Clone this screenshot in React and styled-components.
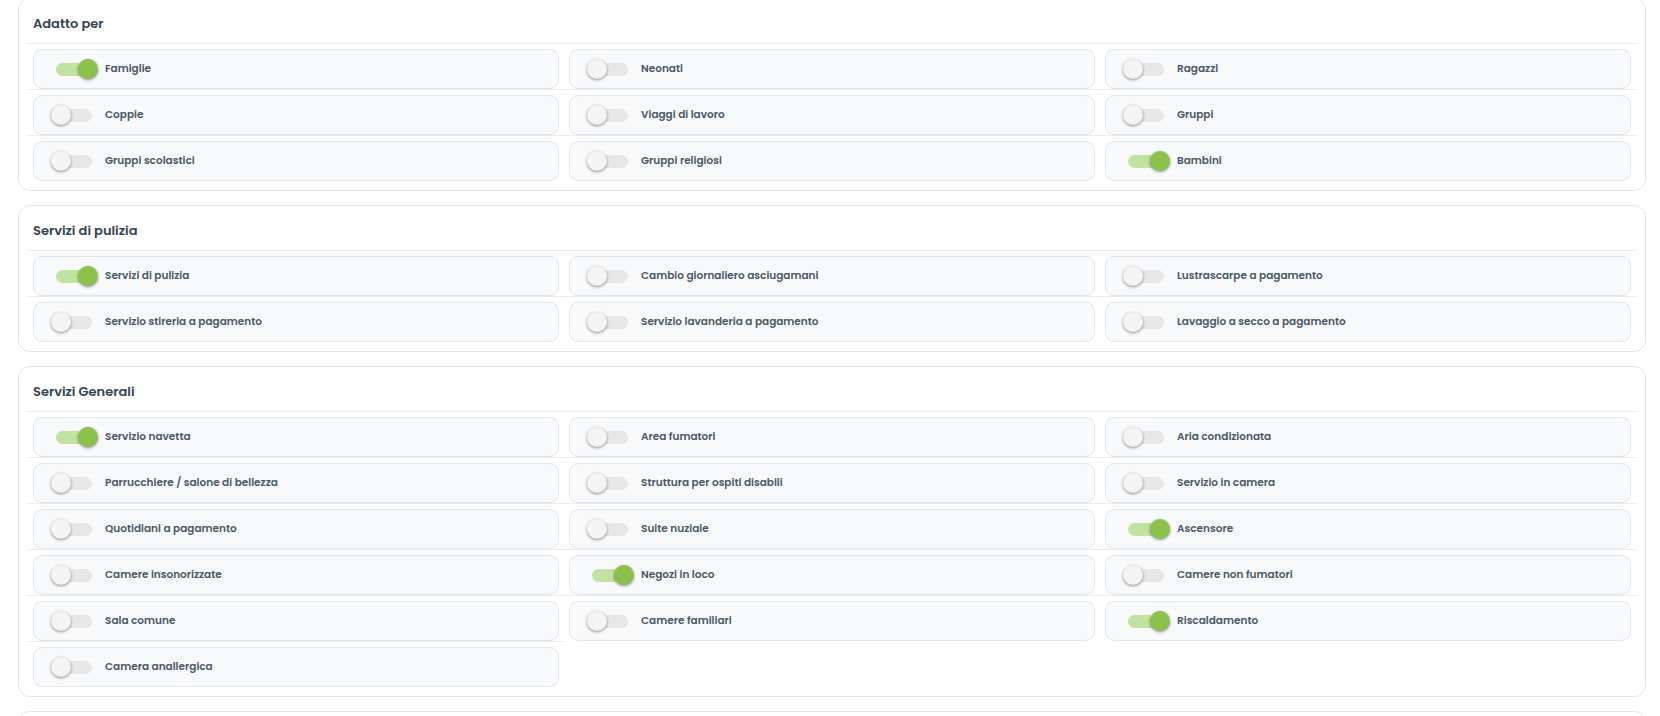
import React, { useState } from 'react';
import styled, { createGlobalStyle } from 'styled-components';

const GlobalStyle = createGlobalStyle`
  html, body {
    margin: 0;
    padding: 0;
    background: #ffffff;
    overflow: hidden;
  }
  * {
    box-sizing: border-box;
  }
`;

const sections = [
  {
    title: 'Adatto per',
    items: [
      ['Famiglie', true],
      ['Neonati', false],
      ['Ragazzi', false],
      ['Coppie', false],
      ['Viaggi di lavoro', false],
      ['Gruppi', false],
      ['Gruppi scolastici', false],
      ['Gruppi religiosi', false],
      ['Bambini', true],
    ],
  },
  {
    title: 'Servizi di pulizia',
    items: [
      ['Servizi di pulizia', true],
      ['Cambio giornaliero asciugamani', false],
      ['Lustrascarpe a pagamento', false],
      ['Servizio stireria a pagamento', false],
      ['Servizio lavanderia a pagamento', false],
      ['Lavaggio a secco a pagamento', false],
    ],
  },
  {
    title: 'Servizi Generali',
    items: [
      ['Servizio navetta', true],
      ['Area fumatori', false],
      ['Aria condizionata', false],
      ['Parrucchiere / salone di bellezza', false],
      ['Struttura per ospiti disabili', false],
      ['Servizio in camera', false],
      ['Quotidiani a pagamento', false],
      ['Suite nuziale', false],
      ['Ascensore', true],
      ['Camere insonorizzate', false],
      ['Negozi in loco', true],
      ['Camere non fumatori', false],
      ['Sala comune', false],
      ['Camere familiari', false],
      ['Riscaldamento', true],
      ['Camera anallergica', false],
    ],
  },
  {
    title: 'Servizi di ristorazione',
    items: [
      ['Ristorante', false],
      ['Bar', false],
      ['Colazione in camera', false],
    ],
  },
];

function Toggle({ on, onClick }) {
  return (
    <Switch type="button" role="switch" aria-checked={on} onClick={onClick}>
      <Track $on={on} />
      <Knob $on={on} />
    </Switch>
  );
}

function Section({ title, items }) {
  const [values, setValues] = useState(items.map(([, on]) => on));

  const flip = (idx) => {
    setValues((prev) => prev.map((v, i) => (i === idx ? !v : v)));
  };

  return (
    <Card>
      <CardHeader>
        <CardTitle>{title}</CardTitle>
      </CardHeader>
      <Grid>
        {items.map(([label], idx) => (
          <Cell key={label}>
            <Option>
              <Toggle on={values[idx]} onClick={() => flip(idx)} />
              <OptionLabel>{label}</OptionLabel>
            </Option>
          </Cell>
        ))}
      </Grid>
    </Card>
  );
}

export default function App() {
  return (
    <>
      <GlobalStyle />
      <Page>
        {sections.map((s) => (
          <Section key={s.title} title={s.title} items={s.items} />
        ))}
      </Page>
    </>
  );
}

const Page = styled.div`
  display: flex;
  flex-direction: column;
  gap: 14px;
  padding: 0 14px 20px 18px;
  margin-top: -2px;
  font-family: 'Poppins', 'Open Sans', 'Noto Sans', sans-serif;
`;

const Card = styled.section`
  background: #ffffff;
  border: 1px solid #dfe5eb;
  border-radius: 12px;
  padding: 0 9px 9px;
`;

const CardHeader = styled.div`
  height: 44px;
  padding: 15px 5px 0;
`;

const CardTitle = styled.h3`
  margin: 0;
  font-size: 13px;
  line-height: 20px;
  font-weight: 600;
  color: #344556;
`;

const Grid = styled.div`
  display: grid;
  grid-template-columns: repeat(3, 1fr);
`;

const Cell = styled.div`
  border-top: 1px solid #e8ecf0;
  padding: 5px 5px 0;
`;

const Option = styled.div`
  display: flex;
  align-items: center;
  gap: 7px;
  height: 40px;
  padding-left: 17px;
  background: #f8f9fb;
  border: 1px solid #e1e6ec;
  border-radius: 9px;
`;

const Switch = styled.button`
  position: relative;
  flex: none;
  width: 47px;
  height: 20px;
  padding: 0;
  border: 0;
  background: transparent;
  cursor: pointer;
`;

const Track = styled.span`
  position: absolute;
  left: 5px;
  top: 4px;
  width: 36px;
  height: 13px;
  border-radius: 7px;
  background: ${(p) => (p.$on ? '#c3e2a2' : '#e7e7e7')};
`;

const Knob = styled.span`
  position: absolute;
  top: 0;
  left: 0;
  width: 20px;
  height: 20px;
  border-radius: 50%;
  background: ${(p) => (p.$on ? '#8bc34a' : '#f4f4f4')};
  box-shadow: 0 1px 3px rgba(0, 0, 0, 0.45);
  transform: translateX(${(p) => (p.$on ? '27px' : '0')});
  transition: transform 0.15s ease;
`;

const OptionLabel = styled.span`
  font-size: 10.5px;
  font-weight: 600;
  color: #4a5868;
  white-space: nowrap;
`;
